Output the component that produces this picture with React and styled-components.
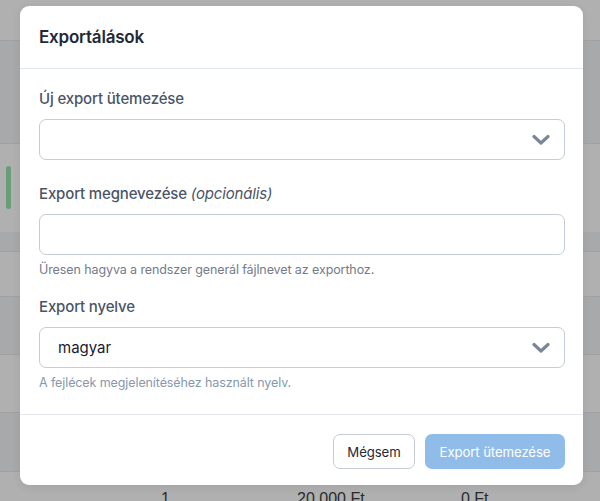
import React from "react";
import styled, { createGlobalStyle } from "styled-components";

const Global = createGlobalStyle`
  html, body { margin: 0; padding: 0; }
  body { font-family: Inter, "Noto Sans", "Liberation Sans", sans-serif; background: #b0b0b0; }
  * { box-sizing: border-box; }
`;

const Page = styled.div`
  position: relative;
  width: 600px;
  height: 501px;
  overflow: hidden;
  background: #b0b0b0;
`;

const Table = styled.div`
  display: flex;
  flex-direction: column;
`;

const Band = styled.div`
  height: ${(p) => p.h}px;
  background: ${(p) => (p.dark ? "#a8a9ab" : "#b0b0b0")};
  border-top: ${(p) => (p.line ? "1px solid #a0a1a3" : "none")};
  position: relative;
  display: flex;
  align-items: flex-start;
`;

const StatusBar = styled.div`
  width: 5px;
  height: 43px;
  margin: 22px 0 0 6px;
  border-radius: 3px;
  background: #689d78;
`;

const Cell = styled.span`
  position: absolute;
  top: 18px;
  left: ${(p) => p.x}px;
  font-size: 16px;
  color: #2b2b2b;
  font-family: "Liberation Sans", Arial, sans-serif;
`;

const Modal = styled.div`
  position: absolute;
  left: 20px;
  top: 6px;
  width: 563px;
  height: 479px;
  background: #ffffff;
  border-radius: 9px;
  display: flex;
  flex-direction: column;
  box-shadow: 0 2px 8px rgba(0, 0, 0, 0.08);
`;

const Header = styled.div`
  height: 63px;
  padding: 0 19px;
  display: flex;
  align-items: center;
  border-bottom: 1px solid #e2e7ef;
`;

const Title = styled.h2`
  margin: 0;
  font-size: 17px;
  font-weight: 600;
  color: #1f2937;
  letter-spacing: -0.2px;
`;

const Body = styled.div`
  padding: 20px 18px 22px 19px;
  display: flex;
  flex-direction: column;
  border-bottom: 1px solid #e5e8ee;
`;

const Field = styled.div`
  display: flex;
  flex-direction: column;
  margin-top: ${(p) => p.mt || 0}px;
`;

const Label = styled.label`
  font-size: 15px;
  line-height: 20px;
  font-weight: 500;
  color: #4a5568;
  margin-bottom: 10px;
  letter-spacing: -0.15px;
`;

const Optional = styled.em`
  font-style: italic;
  font-weight: 400;
`;

const Control = styled.div`
  position: relative;
  height: ${(p) => p.h || 41}px;
  border: 1px solid #c4ccd8;
  border-radius: 7px;
  background: #fff;
  display: flex;
  align-items: center;
  padding: 0 18px;
  font-size: 15px;
  color: #1a202c;
`;

const Chevron = styled.svg`
  position: absolute;
  right: 14px;
  top: 50%;
  transform: translateY(-50%);
`;

const Help = styled.div`
  margin-top: 6px;
  font-size: 12.5px;
  line-height: 18px;
  letter-spacing: -0.1px;
  color: ${(p) => p.c || "#737b8a"};
`;

const Footer = styled.div`
  flex: 1;
  display: flex;
  justify-content: flex-end;
  align-items: flex-start;
  gap: 10px;
  padding: 19px 18px 0 19px;
`;

const Button = styled.button`
  height: 35px;
  width: ${(p) => p.w}px;
  border-radius: 7px;
  font-family: inherit;
  font-size: 13.2px;
  font-weight: 400;
  letter-spacing: -0.1px;
  cursor: pointer;
  border: ${(p) => (p.primary ? "none" : "1px solid #c4ccd8")};
  background: ${(p) => (p.primary ? "#90bce9" : "#ffffff")};
  color: ${(p) => (p.primary ? "#ffffff" : "#1f2937")};
`;

const ChevronIcon = () => (
  <Chevron width="18" height="11" viewBox="0 0 18 11">
    <polyline
      points="2,2 9,8.5 16,2"
      fill="none"
      stroke="#7b8798"
      strokeWidth="3.2"
      strokeLinecap="round"
      strokeLinejoin="round"
    />
  </Chevron>
);

export default function App() {
  return (
    <>
      <Global />
      <Page>
        <Table>
          <Band h={40} />
          <Band h={103} dark line />
          <Band h={89} line>
            <StatusBar />
          </Band>
          <Band h={19} dark />
          <Band h={45} line />
          <Band h={58} dark line />
          <Band h={58} line />
          <Band h={59} dark line />
          <Band h={30} line>
            <Cell x={161}>1</Cell>
            <Cell x={297}>20 000 Ft</Cell>
            <Cell x={461}>0 Ft</Cell>
          </Band>
        </Table>
        <Modal>
          <Header>
            <Title>Exportálások</Title>
          </Header>
          <Body>
            <Field>
              <Label>Új export ütemezése</Label>
              <Control>
                <ChevronIcon />
              </Control>
            </Field>
            <Field mt={24}>
              <Label>
                Export megnevezése <Optional>(opcionális)</Optional>
              </Label>
              <Control h={41} />
              <Help>Üresen hagyva a rendszer generál fájlnevet az exporthoz.</Help>
            </Field>
            <Field mt={18}>
              <Label>Export nyelve</Label>
              <Control>
                magyar
                <ChevronIcon />
              </Control>
              <Help c="#8797ae">A fejlécek megjelenítéséhez használt nyelv.</Help>
            </Field>
          </Body>
          <Footer>
            <Button w={82}>Mégsem</Button>
            <Button primary w={140}>
              Export ütemezése
            </Button>
          </Footer>
        </Modal>
      </Page>
    </>
  );
}
